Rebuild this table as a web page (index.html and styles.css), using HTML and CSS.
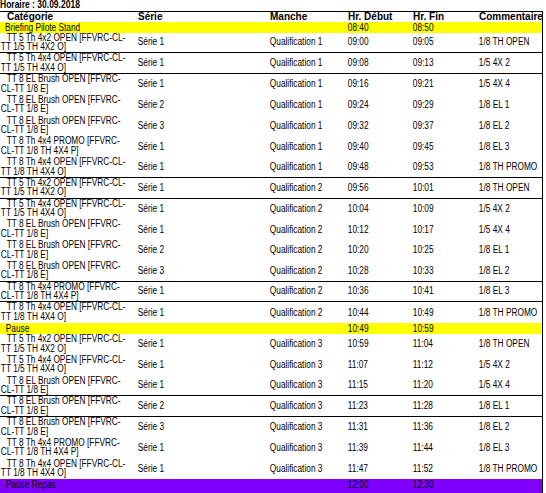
FILE: index.html
```html
<!DOCTYPE html>
<html lang="fr">
<head>
<meta charset="utf-8">
<title>Horaire</title>
<link rel="stylesheet" href="styles.css">
</head>
<body>
<div class="title"><span>Horaire : 30.09.2018</span></div>
<div class="sheet">
  <div class="row head"><span>Catégorie</span><span>Série</span><span>Manche</span><span>Hr. Début</span><span>Hr. Fin</span><span>Commentaire</span></div>
  <div class="row band yellow first"><span class="lbl">Briefing Pilote Stand</span><span></span><span></span><span>08:40</span><span>08:50</span><span></span></div>

  <div class="row bb"><span class="cat">TT 5 Th 4x2 OPEN [FFVRC-CL-<br>TT 1/5 TH 4X2 O]</span><span>Série 1</span><span>Qualification 1</span><span>09:00</span><span>09:05</span><span>1/8 TH OPEN</span></div>
  <div class="row bb"><span class="cat">TT 5 Th 4x4 OPEN [FFVRC-CL-<br>TT 1/5 TH 4X4 O]</span><span>Série 1</span><span>Qualification 1</span><span>09:08</span><span>09:13</span><span>1/5 4X 2</span></div>
  <div class="row"><span class="cat">TT 8 EL Brush OPEN [FFVRC-<br>CL-TT 1/8 E]</span><span>Série 1</span><span>Qualification 1</span><span>09:16</span><span>09:21</span><span>1/5 4X 4</span></div>
  <div class="row"><span class="cat">TT 8 EL Brush OPEN [FFVRC-<br>CL-TT 1/8 E]</span><span>Série 2</span><span>Qualification 1</span><span>09:24</span><span>09:29</span><span>1/8 EL 1</span></div>
  <div class="row"><span class="cat">TT 8 EL Brush OPEN [FFVRC-<br>CL-TT 1/8 E]</span><span>Série 3</span><span>Qualification 1</span><span>09:32</span><span>09:37</span><span>1/8 EL 2</span></div>
  <div class="row"><span class="cat">TT 8 Th 4x4 PROMO [FFVRC-<br>CL-TT 1/8 TH 4X4 P]</span><span>Série 1</span><span>Qualification 1</span><span>09:40</span><span>09:45</span><span>1/8 EL 3</span></div>
  <div class="row bb"><span class="cat">TT 8 Th 4x4 OPEN [FFVRC-CL-<br>TT 1/8 TH 4X4 O]</span><span>Série 1</span><span>Qualification 1</span><span>09:48</span><span>09:53</span><span>1/8 TH PROMO</span></div>

  <div class="row bb"><span class="cat">TT 5 Th 4x2 OPEN [FFVRC-CL-<br>TT 1/5 TH 4X2 O]</span><span>Série 1</span><span>Qualification 2</span><span>09:56</span><span>10:01</span><span>1/8 TH OPEN</span></div>
  <div class="row"><span class="cat">TT 5 Th 4x4 OPEN [FFVRC-CL-<br>TT 1/5 TH 4X4 O]</span><span>Série 1</span><span>Qualification 2</span><span>10:04</span><span>10:09</span><span>1/5 4X 2</span></div>
  <div class="row"><span class="cat">TT 8 EL Brush OPEN [FFVRC-<br>CL-TT 1/8 E]</span><span>Série 1</span><span>Qualification 2</span><span>10:12</span><span>10:17</span><span>1/5 4X 4</span></div>
  <div class="row"><span class="cat">TT 8 EL Brush OPEN [FFVRC-<br>CL-TT 1/8 E]</span><span>Série 2</span><span>Qualification 2</span><span>10:20</span><span>10:25</span><span>1/8 EL 1</span></div>
  <div class="row bb"><span class="cat">TT 8 EL Brush OPEN [FFVRC-<br>CL-TT 1/8 E]</span><span>Série 3</span><span>Qualification 2</span><span>10:28</span><span>10:33</span><span>1/8 EL 2</span></div>
  <div class="row bb"><span class="cat">TT 8 Th 4x4 PROMO [FFVRC-<br>CL-TT 1/8 TH 4X4 P]</span><span>Série 1</span><span>Qualification 2</span><span>10:36</span><span>10:41</span><span>1/8 EL 3</span></div>
  <div class="row"><span class="cat">TT 8 Th 4x4 OPEN [FFVRC-CL-<br>TT 1/8 TH 4X4 O]</span><span>Série 1</span><span>Qualification 2</span><span>10:44</span><span>10:49</span><span>1/8 TH PROMO</span></div>

  <div class="row band yellow pause"><span class="lbl">Pause</span><span></span><span></span><span>10:49</span><span>10:59</span><span></span></div>

  <div class="row"><span class="cat">TT 5 Th 4x2 OPEN [FFVRC-CL-<br>TT 1/5 TH 4X2 O]</span><span>Série 1</span><span>Qualification 3</span><span>10:59</span><span>11:04</span><span>1/8 TH OPEN</span></div>
  <div class="row"><span class="cat">TT 5 Th 4x4 OPEN [FFVRC-CL-<br>TT 1/5 TH 4X4 O]</span><span>Série 1</span><span>Qualification 3</span><span>11:07</span><span>11:12</span><span>1/5 4X 2</span></div>
  <div class="row bb"><span class="cat">TT 8 EL Brush OPEN [FFVRC-<br>CL-TT 1/8 E]</span><span>Série 1</span><span>Qualification 3</span><span>11:15</span><span>11:20</span><span>1/5 4X 4</span></div>
  <div class="row bb"><span class="cat">TT 8 EL Brush OPEN [FFVRC-<br>CL-TT 1/8 E]</span><span>Série 2</span><span>Qualification 3</span><span>11:23</span><span>11:28</span><span>1/8 EL 1</span></div>
  <div class="row"><span class="cat">TT 8 EL Brush OPEN [FFVRC-<br>CL-TT 1/8 E]</span><span>Série 3</span><span>Qualification 3</span><span>11:31</span><span>11:36</span><span>1/8 EL 2</span></div>
  <div class="row"><span class="cat">TT 8 Th 4x4 PROMO [FFVRC-<br>CL-TT 1/8 TH 4X4 P]</span><span>Série 1</span><span>Qualification 3</span><span>11:39</span><span>11:44</span><span>1/8 EL 3</span></div>
  <div class="row"><span class="cat">TT 8 Th 4x4 OPEN [FFVRC-CL-<br>TT 1/8 TH 4X4 O]</span><span>Série 1</span><span>Qualification 3</span><span>11:47</span><span>11:52</span><span>1/8 TH PROMO</span></div>

  <div class="row band purple"><span class="lbl">Pause Repas</span><span></span><span></span><span>12:00</span><span>12:30</span><span></span></div>
</div>
</body>
</html>
```
FILE: styles.css
```css
html, body {
  margin: 0;
  padding: 0;
  background: #ffffff;
}

body {
  font-family: "Liberation Sans", Arial, sans-serif;
  font-size: 10px;
  color: #000000;
  overflow: hidden;
}

.title {
  font-weight: bold;
  line-height: 10px;
  height: 11px;
}

.title > span {
  display: inline-block;
  transform: scaleX(0.85);
  transform-origin: 0 50%;
  white-space: nowrap;
}

.sheet {
  width: 542px;
  border-top: 1px solid #000000;
  border-right: 1px solid #000000;
}

.row {
  display: grid;
  grid-template-columns: 137px 132px 78px 65px 66px 64px;
  box-sizing: border-box;
  height: 20.75px;
  align-items: center;
  line-height: 10px;
}

.row > span {
  padding-left: 1px;
  white-space: nowrap;
  transform: scaleX(0.83);
  transform-origin: 0 50%;
}

.row > .cat {
  align-self: start;
  display: block;
  line-height: 9.5px;
  text-indent: 7px;
  transform-origin: 0 0;
}

.bb {
  border-bottom: 1px solid #000000;
}

.head {
  height: 10px;
  font-weight: bold;
  line-height: 10px;
  align-items: end;
}

.head > span {
  transform: none;
}

.head > span:first-child {
  padding-left: 7px;
}

.band {
  align-items: end;
  line-height: 10px;
}

.band > .lbl {
  padding-left: 6px;
}

.yellow {
  background: #ffff00;
}

.first {
  height: 10.5px;
}

.pause {
  height: 11px;
}

.pause > .lbl {
  padding-left: 7px;
}

.purple {
  background: #8000ff;
  height: 14px;
  align-items: start;
}

.purple > span {
  padding-top: 1px;
}

.purple > .lbl {
  padding-left: 7px;
}
```
